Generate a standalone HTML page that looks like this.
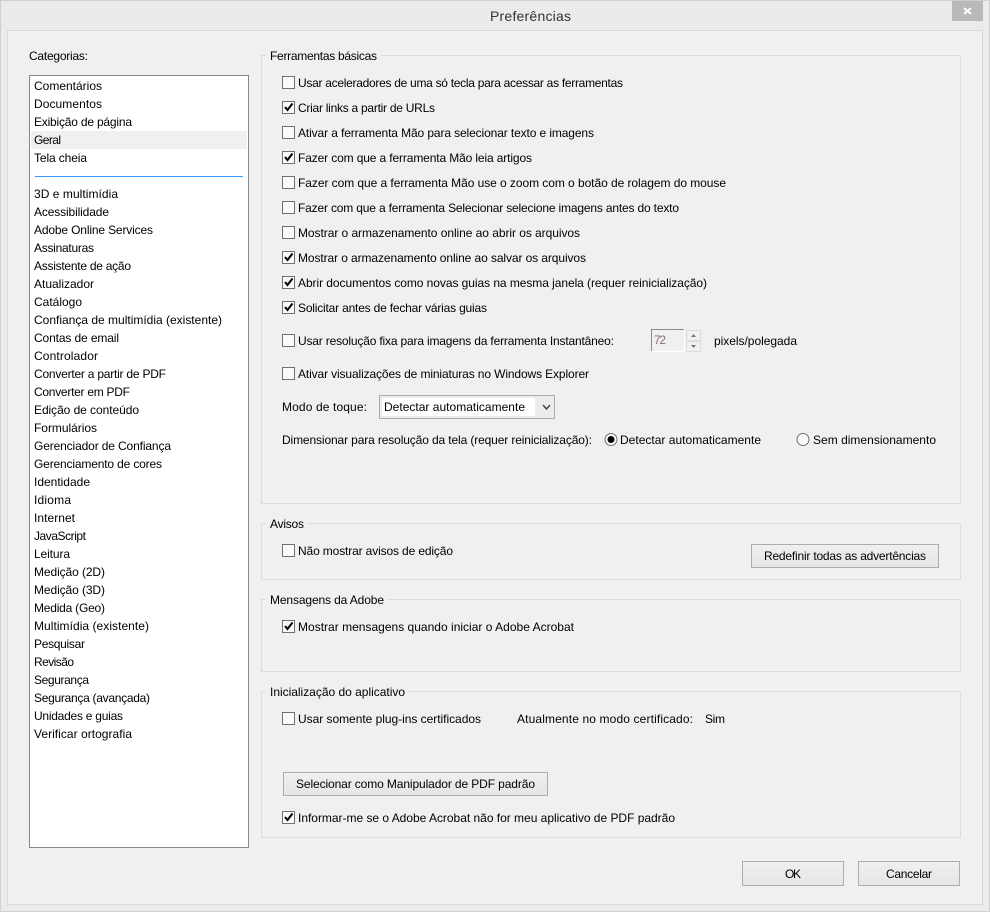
<!DOCTYPE html>
<html lang="pt-BR"><head><meta charset="utf-8"><title>Preferências</title>
<style>
html,body{margin:0;padding:0;background:#f0f0f0;width:990px;height:912px;overflow:hidden}
svg{display:block;position:absolute;left:0;top:0}
text{font-family:"Liberation Sans",sans-serif;font-size:12px;fill:#000}
.cb{fill:#fafafa;stroke:#707070;stroke-width:1}
.ck{fill:none;stroke:#000;stroke-width:2}
.gb{fill:#f0f0f0;stroke:#dcdcdc;stroke-width:1}
.btn{fill:url(#bg);stroke:#adadad;stroke-width:1}
</style></head><body>
<svg width="990" height="912" viewBox="0 0 990 912" xmlns="http://www.w3.org/2000/svg">
<defs><linearGradient id="bg" x1="0" y1="0" x2="0" y2="1"><stop offset="0" stop-color="#f0f0f0"/><stop offset="1" stop-color="#e5e5e5"/></linearGradient></defs>
<rect x="0" y="0" width="990" height="912" fill="#ebebeb"/>
<rect x="0.5" y="0.5" width="989" height="911" fill="none" stroke="#d0d0d0"/>
<rect x="7.5" y="30.5" width="975" height="874" fill="#f0f0f0" stroke="#d8d8d8"/>
<rect x="952" y="1" width="31" height="20" fill="#b9b9b9"/>
<path d="M964 8l7 6M971 8l-7 6" stroke="#fff" stroke-width="2" fill="none"/>
<text x="490" y="21" font-size="14" style="font-size:14px;fill:#333" textLength="81" lengthAdjust="spacing">Preferências</text>

<text x="29" y="60" textLength="59" lengthAdjust="spacing">Categorias:</text>
<rect x="29.5" y="75.5" width="219" height="772" fill="#fff" stroke="#828790"/>
<rect x="31" y="131" width="216" height="18" fill="#f0f0f0"/>
<rect x="35" y="176" width="208" height="1" fill="#3399ff"/>
<text x="34" y="90" textLength="68" lengthAdjust="spacing">Comentários</text>
<text x="34" y="108" textLength="68" lengthAdjust="spacing">Documentos</text>
<text x="34" y="126" textLength="98" lengthAdjust="spacing">Exibição de página</text>
<text x="34" y="144" textLength="27" lengthAdjust="spacing">Geral</text>
<text x="34" y="162" textLength="53" lengthAdjust="spacing">Tela cheia</text>
<text x="34" y="198" textLength="84" lengthAdjust="spacing">3D e multimídia</text>
<text x="34" y="216" textLength="75" lengthAdjust="spacing">Acessibilidade</text>
<text x="34" y="234" textLength="119" lengthAdjust="spacing">Adobe Online Services</text>
<text x="34" y="252" textLength="60" lengthAdjust="spacing">Assinaturas</text>
<text x="34" y="270" textLength="97" lengthAdjust="spacing">Assistente de ação</text>
<text x="34" y="288" textLength="60" lengthAdjust="spacing">Atualizador</text>
<text x="34" y="306" textLength="48" lengthAdjust="spacing">Catálogo</text>
<text x="34" y="324" textLength="188" lengthAdjust="spacing">Confiança de multimídia (existente)</text>
<text x="34" y="342" textLength="85" lengthAdjust="spacing">Contas de email</text>
<text x="34" y="360" textLength="64" lengthAdjust="spacing">Controlador</text>
<text x="34" y="378" textLength="132" lengthAdjust="spacing">Converter a partir de PDF</text>
<text x="34" y="396" textLength="96" lengthAdjust="spacing">Converter em PDF</text>
<text x="34" y="414" textLength="105" lengthAdjust="spacing">Edição de conteúdo</text>
<text x="34" y="432" textLength="63" lengthAdjust="spacing">Formulários</text>
<text x="34" y="450" textLength="137" lengthAdjust="spacing">Gerenciador de Confiança</text>
<text x="34" y="468" textLength="128" lengthAdjust="spacing">Gerenciamento de cores</text>
<text x="34" y="486" textLength="56" lengthAdjust="spacing">Identidade</text>
<text x="34" y="504" textLength="37" lengthAdjust="spacing">Idioma</text>
<text x="34" y="522" textLength="41" lengthAdjust="spacing">Internet</text>
<text x="34" y="540" textLength="52" lengthAdjust="spacing">JavaScript</text>
<text x="34" y="558" textLength="36" lengthAdjust="spacing">Leitura</text>
<text x="34" y="576" textLength="71" lengthAdjust="spacing">Medição (2D)</text>
<text x="34" y="594" textLength="71" lengthAdjust="spacing">Medição (3D)</text>
<text x="34" y="612" textLength="71" lengthAdjust="spacing">Medida (Geo)</text>
<text x="34" y="630" textLength="115" lengthAdjust="spacing">Multimídia (existente)</text>
<text x="34" y="648" textLength="51" lengthAdjust="spacing">Pesquisar</text>
<text x="34" y="666" textLength="40" lengthAdjust="spacing">Revisão</text>
<text x="34" y="684" textLength="55" lengthAdjust="spacing">Segurança</text>
<text x="34" y="702" textLength="116" lengthAdjust="spacing">Segurança (avançada)</text>
<text x="34" y="720" textLength="89" lengthAdjust="spacing">Unidades e guias</text>
<text x="34" y="738" textLength="98" lengthAdjust="spacing">Verificar ortografia</text>

<rect class="gb" x="261.5" y="55.5" width="699" height="448"/>
<rect x="266" y="50" width="115" height="12" fill="#f0f0f0"/>
<text x="270" y="60" textLength="107" lengthAdjust="spacing">Ferramentas básicas</text>
<rect class="gb" x="261.5" y="523.5" width="699" height="56"/>
<rect x="266" y="518" width="42" height="12" fill="#f0f0f0"/>
<text x="270" y="528" textLength="34" lengthAdjust="spacing">Avisos</text>
<rect class="gb" x="261.5" y="599.5" width="699" height="72"/>
<rect x="266" y="594" width="122" height="12" fill="#f0f0f0"/>
<text x="270" y="604" textLength="114" lengthAdjust="spacing">Mensagens da Adobe</text>
<rect class="gb" x="261.5" y="691.5" width="699" height="146"/>
<rect x="266" y="686" width="143" height="12" fill="#f0f0f0"/>
<text x="270" y="696" textLength="135" lengthAdjust="spacing">Inicialização do aplicativo</text>

<rect class="cb" x="282.5" y="76.5" width="12" height="12"/>
<text x="298" y="87" textLength="325" lengthAdjust="spacing">Usar aceleradores de uma só tecla para acessar as ferramentas</text>
<rect class="cb" x="282.5" y="101.5" width="12" height="12"/><path class="ck" d="M285 107l2.5 3 5-6.5"/>
<text x="298" y="112" textLength="137" lengthAdjust="spacing">Criar links a partir de URLs</text>
<rect class="cb" x="282.5" y="126.5" width="12" height="12"/>
<text x="298" y="137" textLength="296" lengthAdjust="spacing">Ativar a ferramenta Mão para selecionar texto e imagens</text>
<rect class="cb" x="282.5" y="151.5" width="12" height="12"/><path class="ck" d="M285 157l2.5 3 5-6.5"/>
<text x="298" y="162" textLength="234" lengthAdjust="spacing">Fazer com que a ferramenta Mão leia artigos</text>
<rect class="cb" x="282.5" y="176.5" width="12" height="12"/>
<text x="298" y="187" textLength="428" lengthAdjust="spacing">Fazer com que a ferramenta Mão use o zoom com o botão de rolagem do mouse</text>
<rect class="cb" x="282.5" y="201.5" width="12" height="12"/>
<text x="298" y="212" textLength="381" lengthAdjust="spacing">Fazer com que a ferramenta Selecionar selecione imagens antes do texto</text>
<rect class="cb" x="282.5" y="226.5" width="12" height="12"/>
<text x="298" y="237" textLength="282" lengthAdjust="spacing">Mostrar o armazenamento online ao abrir os arquivos</text>
<rect class="cb" x="282.5" y="251.5" width="12" height="12"/><path class="ck" d="M285 257l2.5 3 5-6.5"/>
<text x="298" y="262" textLength="288" lengthAdjust="spacing">Mostrar o armazenamento online ao salvar os arquivos</text>
<rect class="cb" x="282.5" y="276.5" width="12" height="12"/><path class="ck" d="M285 282l2.5 3 5-6.5"/>
<text x="298" y="287" textLength="409" lengthAdjust="spacing">Abrir documentos como novas guias na mesma janela (requer reinicialização)</text>
<rect class="cb" x="282.5" y="301.5" width="12" height="12"/><path class="ck" d="M285 307l2.5 3 5-6.5"/>
<text x="298" y="312" textLength="189" lengthAdjust="spacing">Solicitar antes de fechar várias guias</text>
<rect class="cb" x="282.5" y="334.5" width="12" height="12"/>
<text x="298" y="345" textLength="316" lengthAdjust="spacing">Usar resolução fixa para imagens da ferramenta Instantâneo:</text>
<rect x="651.5" y="329.5" width="33" height="22" fill="#f0f0f0" stroke="#fff"/>
<path d="M651.5 351V329.5H684" stroke="#8a8a8a" fill="none"/>
<text x="654" y="344" textLength="12" lengthAdjust="spacing" style="fill:#8a7070">72</text>
<rect x="686.5" y="330.5" width="14" height="10" fill="#f0f0f0" stroke="#dcdcdc"/>
<rect x="686.5" y="341.5" width="14" height="10" fill="#f0f0f0" stroke="#dcdcdc"/>
<path d="M691 337h5l-2.500-3z M691 345h5l-2.500 3z" fill="#777"/>
<text x="714" y="345" textLength="83" lengthAdjust="spacing">pixels/polegada</text>
<rect class="cb" x="282.500" y="367.500" width="12" height="12"/>
<text x="298" y="378" textLength="291" lengthAdjust="spacing">Ativar visualizações de miniaturas no Windows Explorer</text>
<text x="282" y="411" textLength="85" lengthAdjust="spacing">Modo de toque:</text>
<rect x="379.500" y="395.500" width="175" height="23" fill="#ececec" stroke="#acacac"/>
<rect x="382" y="398" width="153" height="18" fill="#fff"/>
<text x="384" y="411" textLength="141" lengthAdjust="spacing">Detectar automaticamente</text>
<path d="M543 405l3.500 4 3.500-4" fill="none" stroke="#444" stroke-width="1.500"/>
<text x="282" y="444" textLength="310" lengthAdjust="spacing">Dimensionar para resolução da tela (requer reinicialização):</text>
<circle cx="611" cy="439.500" r="6" fill="#fafafa" stroke="#707070"/><circle cx="611" cy="439.500" r="3.500" fill="#000"/>
<text x="620" y="444" textLength="141" lengthAdjust="spacing">Detectar automaticamente</text>
<circle cx="803" cy="439.500" r="6" fill="#fafafa" stroke="#707070"/>
<text x="813" y="444" textLength="123" lengthAdjust="spacing">Sem dimensionamento</text>

<rect class="cb" x="282.500" y="544.500" width="12" height="12"/>
<text x="298" y="555" textLength="155" lengthAdjust="spacing">Não mostrar avisos de edição</text>
<rect class="btn" x="751.500" y="544.500" width="187" height="23"/>
<text x="764" y="560" textLength="162" lengthAdjust="spacing">Redefinir todas as advertências</text>

<rect class="cb" x="282.500" y="620.500" width="12" height="12"/><path class="ck" d="M285 626l2.500 3 5-6.500"/>
<text x="298" y="631" textLength="276" lengthAdjust="spacing">Mostrar mensagens quando iniciar o Adobe Acrobat</text>

<rect class="cb" x="282.500" y="712.500" width="12" height="12"/>
<text x="298" y="723" textLength="183" lengthAdjust="spacing">Usar somente plug-ins certificados</text>
<text x="517" y="723" textLength="176" lengthAdjust="spacing">Atualmente no modo certificado:</text>
<text x="705" y="723" textLength="20" lengthAdjust="spacing">Sim</text>
<rect class="btn" x="283.500" y="772.500" width="264" height="23"/>
<text x="296" y="788" textLength="239" lengthAdjust="spacing">Selecionar como Manipulador de PDF padrão</text>
<rect class="cb" x="282.500" y="811.500" width="12" height="12"/><path class="ck" d="M285 817l2.500 3 5-6.500"/>
<text x="298" y="822" textLength="377" lengthAdjust="spacing">Informar-me se o Adobe Acrobat não for meu aplicativo de PDF padrão</text>

<rect class="btn" x="742.500" y="861.500" width="101" height="24"/>
<text x="785" y="878" textLength="16" lengthAdjust="spacing">OK</text>
<rect class="btn" x="858.500" y="861.500" width="101" height="24"/>
<text x="886" y="878" textLength="46" lengthAdjust="spacing">Cancelar</text>
</svg>
</body></html>
